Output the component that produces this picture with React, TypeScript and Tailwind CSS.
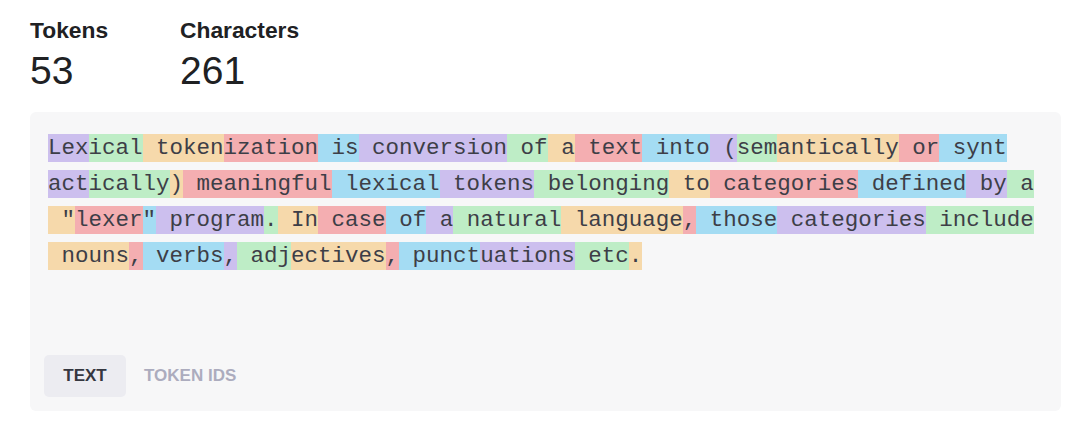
import React from "react";

const COLORS = [
  "bg-[rgba(107,64,216,0.3)]",
  "bg-[rgba(104,222,122,0.4)]",
  "bg-[rgba(244,172,54,0.4)]",
  "bg-[rgba(239,65,70,0.4)]",
  "bg-[rgba(39,181,234,0.4)]",
];

const LINES: string[][] = [
  ["Lex", "ical", " token", "ization", " is", " conversion", " of", " a", " text", " into", " (", "sem", "antically", " or", " synt"],
  ["act", "ically", ")", " meaningful", " lexical", " tokens", " belonging", " to", " categories", " defined", " by", " a"],
  [" \"", "lexer", "\"", " program", ".", " In", " case", " of", " a", " natural", " language", ",", " those", " categories", " include"],
  [" nouns", ",", " verbs", ",", " adj", "ectives", ",", " punct", "uations", " etc", "."],
];

export default function App() {
  let idx = 0;
  return (
    <div className="min-h-[421px] w-[1074px] bg-white pl-[30px] pr-[13px] pt-[16px]">
      <div className="flex font-['Liberation_Sans',Arial,sans-serif] text-[#202123]">
        <div className="w-[150px]">
          <div className="text-[22.8px] font-bold leading-[28px]">Tokens</div>
          <div className="mt-[5px] text-[39px] leading-[44px]">53</div>
        </div>
        <div>
          <div className="text-[22.8px] font-bold leading-[28px]">Characters</div>
          <div className="mt-[5px] text-[39px] leading-[44px]">261</div>
        </div>
      </div>
      <div className="mt-[19px] flex h-[299px] flex-col rounded-[6px] bg-[#f7f7f8] px-[14px]">
        <div className="pl-[4px] pt-[18px] font-['Liberation_Mono','DejaVu_Sans_Mono',monospace] text-[22.5px] leading-[36px] text-[#3d3e47]">
          {LINES.map((line, li) => (
            <div key={li} className="whitespace-pre">
              {line.map((tok, ti) => {
                const c = COLORS[idx % 5];
                idx++;
                return (
                  <span key={ti} className={`${c} py-[1px]`}>
                    {tok}
                  </span>
                );
              })}
            </div>
          ))}
        </div>
        <div className="mt-auto mb-[14px] flex items-center gap-[2px] font-['Liberation_Sans',Arial,sans-serif] text-[17px] font-bold">
          <div className="flex h-[42px] w-[82px] items-center justify-center rounded-[5px] bg-[#ececf1] text-[#353740]">
            TEXT
          </div>
          <div className="flex h-[42px] items-center px-[16px] text-[#acacbe]">TOKEN IDS</div>
        </div>
      </div>
    </div>
  );
}
